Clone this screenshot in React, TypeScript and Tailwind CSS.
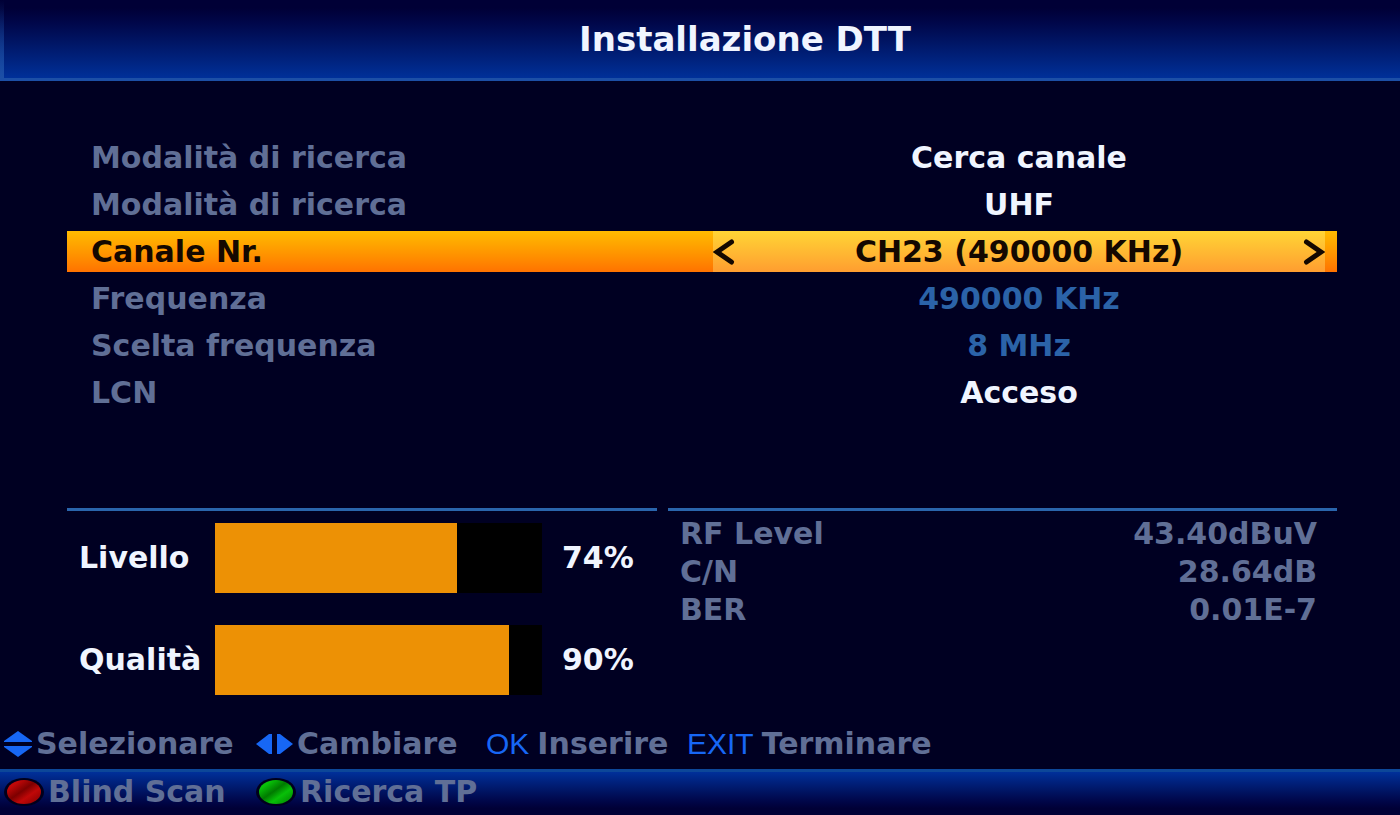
import { useState } from 'react';

type Setting = {
  id: string;
  label: string;
  options: string[];
  readOnly?: boolean;
};

const settings: Setting[] = [
  { id: 'search-mode', label: 'Modalità di ricerca', options: ['Cerca canale'] },
  { id: 'band', label: 'Modalità di ricerca', options: ['UHF'] },
  { id: 'channel', label: 'Canale Nr.', options: ['CH23 (490000 KHz)'] },
  { id: 'frequency', label: 'Frequenza', options: ['490000 KHz'], readOnly: true },
  { id: 'bandwidth', label: 'Scelta frequenza', options: ['8 MHz'], readOnly: true },
  { id: 'lcn', label: 'LCN', options: ['Acceso'] },
];

const meters = [
  { id: 'level', label: 'Livello', value: 74 },
  { id: 'quality', label: 'Qualità', value: 90 },
];

const readings = [
  { label: 'RF Level', value: '43.40dBuV' },
  { label: 'C/N', value: '28.64dB' },
  { label: 'BER', value: '0.01E-7' },
];

function Arrow({ direction }: { direction: 'left' | 'right' }) {
  return (
    <svg viewBox="0 0 22 26" className="w-[22px] h-[26px]" fill="none" stroke="#140800" strokeWidth="5" strokeLinecap="round">
      <path d={direction === 'left' ? 'M18.5 3 L4 13 L18.5 23' : 'M3.5 3 L18 13 L3.5 23'} />
    </svg>
  );
}

function UpDownIcon() {
  return (
    <svg viewBox="0 0 28 26" className="w-7 h-[26px] shrink-0" fill="#1767f5">
      <path d="M14 0 L28 10 V11 H0 V10 Z" />
      <path d="M14 26 L28 16 V15 H0 V16 Z" />
    </svg>
  );
}

function LeftRightIcon() {
  return (
    <svg viewBox="0 0 37 20" className="w-[37px] h-5 shrink-0" fill="#1767f5">
      <path d="M0 10 L13 0 H16 V20 H13 Z" />
      <path d="M37 10 L24 0 H21 V20 H24 Z" />
    </svg>
  );
}

function ColorButton({ id, dark, light }: { id: string; dark: string; light: string }) {
  return (
    <svg viewBox="0 0 40 28" className="w-10 h-7 shrink-0">
      <defs>
        <linearGradient id={id} x1="0" y1="0" x2="1" y2="1">
          <stop offset="0.2" stopColor={light} />
          <stop offset="0.45" stopColor={dark} />
          <stop offset="0.65" stopColor={light} />
          <stop offset="1" stopColor={dark} />
        </linearGradient>
      </defs>
      <ellipse cx="20" cy="14" rx="20" ry="14" fill="#00001c" />
      <ellipse cx="20" cy="14" rx="17" ry="12" fill={`url(#${id})`} />
    </svg>
  );
}

function SettingRow({ setting, active, onSelect }: { setting: Setting; active: boolean; onSelect: () => void }) {
  return (
    <div
      onClick={onSelect}
      className={`grid grid-cols-[646fr_612fr] h-[41px] pr-3 ${
        active ? 'bg-linear-to-b from-[#ffbb00] to-[#ff7200] text-[#140800]' : 'text-[#606f96]'
      }`}
    >
      <label htmlFor={setting.id} className="pl-6 self-center">{setting.label}</label>
      {setting.readOnly ? (
        <output id={setting.id} className="self-center text-center text-[#2b63a8]">{setting.options[0]}</output>
      ) : (
        <div className={`flex items-center ${active ? 'bg-linear-to-b from-[#ffd535] to-[#ff9d30]' : 'text-[#f0f5ff]'}`}>
          {active && <button type="button" aria-label="Precedente"><Arrow direction="left" /></button>}
          <select id={setting.id} onFocus={onSelect} className="flex-1 min-w-0 h-full appearance-none bg-transparent text-center [text-align-last:center] outline-none">
            {setting.options.map((option) => (
              <option key={option}>{option}</option>
            ))}
          </select>
          {active && <button type="button" aria-label="Successivo"><Arrow direction="right" /></button>}
        </div>
      )}
    </div>
  );
}

export default function App() {
  const [activeId, setActiveId] = useState('channel');

  return (
    <div className="min-h-screen flex flex-col bg-[#000022] font-['DejaVu_Sans',sans-serif] font-bold text-[30px] leading-[38px] text-[#606f96] whitespace-nowrap">
      <header className="h-[81px] shrink-0 flex border-b-3 border-[#1c4fa6] bg-linear-to-b from-[#000036] from-10% to-[#003099]">
        <div className="w-1 bg-linear-to-b from-transparent to-[#1c4fa6]" />
        <h1 className="flex-1 pl-[86px] pt-5 text-center text-[34px] text-[#f0f5ff]">Installazione DTT</h1>
      </header>

      <main className="flex-1 flex flex-col pt-14 pl-[67px] pr-[63px]">
        <section className="flex flex-col gap-1.5">
          {settings.map((setting) => (
            <SettingRow
              key={setting.id}
              setting={setting}
              active={setting.id === activeId}
              onSelect={() => setActiveId(setting.id)}
            />
          ))}
        </section>

        <div className="mt-[95px] grid grid-cols-[590fr_669fr] gap-[11px]">
          <section className="border-t-3 border-[#2a65ac] pt-3 pl-3 flex flex-col gap-8 text-[#f0f5ff]">
            {meters.map((meter) => (
              <div key={meter.id} className="flex items-center">
                <span id={meter.id} className="w-[136px]">{meter.label}</span>
                <div
                  role="meter"
                  aria-labelledby={meter.id}
                  aria-valuenow={meter.value}
                  aria-valuemin={0}
                  aria-valuemax={100}
                  className="flex-1 h-[70px] bg-black"
                >
                  <div className="h-full bg-[#ed9105]" style={{ width: `${meter.value}%` }} />
                </div>
                <span className="w-[115px] pl-5">{meter.value}%</span>
              </div>
            ))}
          </section>

          <section className="border-t-3 border-[#2a65ac] pt-1 px-3">
            <table className="w-full">
              <tbody>
                {readings.map((reading) => (
                  <tr key={reading.label}>
                    <th scope="row" className="text-left font-bold">{reading.label}</th>
                    <td className="text-right pr-2">{reading.value}</td>
                  </tr>
                ))}
              </tbody>
            </table>
          </section>
        </div>
      </main>

      <div className="h-[50px] shrink-0 pl-1 grid grid-cols-[252px_230px_201px_auto] items-center">
        <div className="flex items-center gap-1">
          <UpDownIcon />
          Selezionare
        </div>
        <div className="flex items-center gap-1">
          <LeftRightIcon />
          Cambiare
        </div>
        <button type="button" className="flex items-center gap-2">
          <span className="font-['Liberation_Sans',sans-serif] font-normal text-[#1767f5]">OK</span>
          Inserire
        </button>
        <button type="button" className="flex items-center gap-2">
          <span className="font-['Liberation_Sans',sans-serif] font-normal text-[#1767f5]">EXIT</span>
          Terminare
        </button>
      </div>

      <footer className="h-[46px] shrink-0 pl-1 pb-1 grid grid-cols-[252px_auto] items-center border-t-3 border-[#0c4799] bg-linear-to-b from-[#00309a] to-[#000036] to-85%">
        <button type="button" className="flex items-center gap-1">
          <ColorButton id="red-key" dark="#7d0000" light="#c00808" />
          Blind Scan
        </button>
        <button type="button" className="flex items-center gap-1">
          <ColorButton id="green-key" dark="#007a00" light="#08c008" />
          Ricerca TP
        </button>
      </footer>
    </div>
  );
}
